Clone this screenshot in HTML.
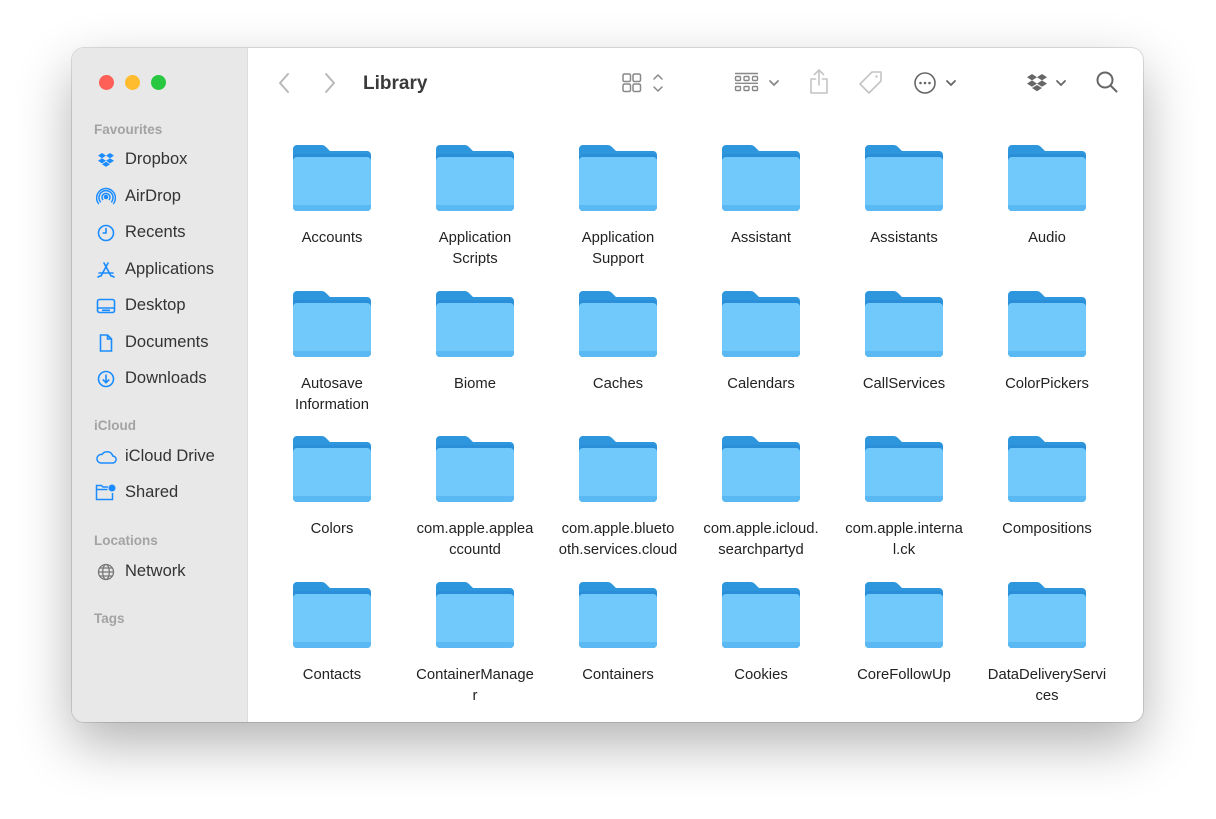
<!DOCTYPE html>
<html><head><meta charset="utf-8"><style>
*{margin:0;padding:0;box-sizing:border-box}
body{width:1216px;height:819px;background:#fff;font-family:"Liberation Sans",sans-serif;position:relative;overflow:hidden}
.win{position:absolute;left:72px;top:48px;width:1071px;height:674px;border-radius:12px;background:#fff;overflow:hidden;box-shadow:0 22px 55px rgba(0,0,0,.3),0 0 0 1px rgba(0,0,0,.12)}
.side{position:absolute;left:0;top:0;width:176px;height:100%;background:#e8e8e8;border-right:1px solid #dcdcdc}
.dot{position:absolute;top:27px;width:15px;height:15px;border-radius:50%}
.sec{position:absolute;left:22px;font-size:13.5px;color:#a3a3a3;font-weight:bold}
.it{position:absolute;left:53px;font-size:16.5px;color:#333}
.ic{position:absolute;left:24px;width:20px;height:20px}
.lbl{position:absolute;width:140px;text-align:center;font-size:14.8px;color:#222;line-height:21px}
.fold{position:absolute;width:78px;height:66px}
.tb{position:absolute}
</style></head><body>
<div class="win">
<div class="side">
<div class="dot" style="left:27px;background:#fe5f57"></div>
<div class="dot" style="left:53px;background:#febc2e"></div>
<div class="dot" style="left:79px;background:#28c840"></div>
<div class="sec" style="top:74px">Favourites</div>
<svg class="ic" style="top:102px" viewBox="0 0 20 20" fill="#1a8cff"><path d="M6 3l4 2.6-4 2.6-4-2.6zM14 3l4 2.6-4 2.6-4-2.6zM2 10.8l4-2.6 4 2.6-4 2.6zM18 10.8l-4-2.6-4 2.6 4 2.6zM6 14.3l4-2.5 4 2.5-4 2.6z"/></svg>
<div class="it" style="top:102px">Dropbox</div>
<svg class="ic" style="top:139px" viewBox="0 0 20 20" fill="none" stroke="#1a8cff" stroke-width="1.5"><circle cx="10" cy="10" r="1.5" fill="#1a8cff"/><path d="M7 13a4 4 0 1 1 6 0M4.8 15.3a7 7 0 1 1 10.4 0M2.8 17a9.4 9.4 0 1 1 14.4 0"/></svg>
<div class="it" style="top:139px">AirDrop</div>
<svg class="ic" style="top:175px" viewBox="0 0 20 20" fill="none" stroke="#1a8cff" stroke-width="1.6"><circle cx="10" cy="10" r="7.5"/><path d="M10 5v5H6.5"/></svg>
<div class="it" style="top:175px">Recents</div>
<svg class="ic" style="top:212px" viewBox="0 0 20 20" fill="none" stroke="#1a8cff" stroke-width="1.6" stroke-linecap="round"><path d="M8 3l7 13M12 3L5 16M3 13h14M2 17l2-1M18 17l-2-1"/></svg>
<div class="it" style="top:212px">Applications</div>
<svg class="ic" style="top:248px" viewBox="0 0 20 20" fill="none" stroke="#1a8cff" stroke-width="1.6"><rect x="1.5" y="3.5" width="17" height="13" rx="2"/><path d="M1.5 12h17M6 14.3h8"/></svg>
<div class="it" style="top:248px">Desktop</div>
<svg class="ic" style="top:285px" viewBox="0 0 20 20" fill="none" stroke="#1a8cff" stroke-width="1.6"><path d="M4.5 2h7l4 4v12h-11zM11.5 2v4h4"/></svg>
<div class="it" style="top:285px">Documents</div>
<svg class="ic" style="top:321px" viewBox="0 0 20 20" fill="none" stroke="#1a8cff" stroke-width="1.6"><circle cx="10" cy="10" r="7.5"/><path d="M10 5.5v8M6.8 10.5l3.2 3.2 3.2-3.2"/></svg>
<div class="it" style="top:321px">Downloads</div>
<div class="sec" style="top:370px">iCloud</div>
<svg class="ic" style="top:399px;left:23px;width:22px" viewBox="0 0 22 20" fill="none" stroke="#1a8cff" stroke-width="1.5"><path d="M5.5 16h12a3.5 3.5 0 0 0 .3-7A6 6 0 0 0 7 7.5 4.3 4.3 0 0 0 5.5 16z"/></svg>
<div class="it" style="top:399px">iCloud Drive</div>
<svg class="ic" style="top:435px;left:23px;width:22px" viewBox="0 0 22 20" fill="none" stroke="#1a8cff" stroke-width="1.5"><path d="M13 4H8L6.5 2.5H1.5v14h16V10M1.5 6.5h11"/><circle cx="17" cy="5" r="3.5" fill="#1a8cff" stroke="none"/></svg>
<div class="it" style="top:435px">Shared</div>
<div class="sec" style="top:485px">Locations</div>
<svg class="ic" style="top:514px" viewBox="0 0 20 20" fill="none" stroke="#777" stroke-width="1.3"><circle cx="10" cy="10" r="7.5"/><ellipse cx="10" cy="10" rx="3.3" ry="7.5"/><path d="M2.5 10h15M3.8 6h12.4M3.8 14h12.4"/></svg>
<div class="it" style="top:514px">Network</div>
<div class="sec" style="top:563px">Tags</div>
</div>
<svg class="tb" style="left:205px;top:24px" width="14" height="22" viewBox="0 0 14 22" fill="none" stroke="#b8b8b8" stroke-width="2" stroke-linecap="round" stroke-linejoin="round"><path d="M11 2L3 11l8 9"/></svg>
<svg class="tb" style="left:251px;top:24px" width="14" height="22" viewBox="0 0 14 22" fill="none" stroke="#b8b8b8" stroke-width="2" stroke-linecap="round" stroke-linejoin="round"><path d="M3 2l8 9-8 9"/></svg>
<div class="tb" style="left:291px;top:25px;font-size:19px;font-weight:bold;color:#3a3a3a">Library</div>
<svg class="tb" style="left:550px;top:24px" width="44" height="22" viewBox="0 0 44 22" fill="none" stroke="#888" stroke-width="1.5" stroke-linejoin="round"><rect x="1" y="2" width="7.5" height="7.5" rx="1.5"/><rect x="11" y="2" width="7.5" height="7.5" rx="1.5"/><rect x="1" y="12" width="7.5" height="7.5" rx="1.5"/><rect x="11" y="12" width="7.5" height="7.5" rx="1.5"/><path d="M32 7l4-4 4 4M32 15l4 4 4-4" stroke-linecap="round"/></svg>
<svg class="tb" style="left:662px;top:24px" width="48" height="22" viewBox="0 0 48 22" fill="none" stroke="#888" stroke-width="1.4"><path d="M1 1.5h23M1 11.3h23"/><rect x="1.5" y="4.5" width="5" height="4" rx="1"/><rect x="10" y="4.5" width="5" height="4" rx="1"/><rect x="18.5" y="4.5" width="5" height="4" rx="1"/><rect x="1.5" y="14.5" width="5" height="4" rx="1"/><rect x="10" y="14.5" width="5" height="4" rx="1"/><rect x="18.5" y="14.5" width="5" height="4" rx="1"/><path d="M36 9l4 4 4-4" stroke-width="1.8" stroke-linecap="round"/></svg>
<svg class="tb" style="left:736px;top:20px" width="22" height="28" viewBox="0 0 22 28" fill="none" stroke="#c4c4c4" stroke-width="1.6" stroke-linecap="round" stroke-linejoin="round"><path d="M11 2v15M6.5 6.5L11 2l4.5 4.5M7.5 11H3v14h16V11h-4.5"/></svg>
<svg class="tb" style="left:785px;top:21px" width="28" height="28" viewBox="0 0 28 28" fill="none" stroke="#c4c4c4" stroke-width="1.6" stroke-linejoin="round"><path d="M15 3h9v9L12 24 3 15z"/><circle cx="19.5" cy="7.5" r="1.2" fill="#c4c4c4" stroke="none"/></svg>
<svg class="tb" style="left:841px;top:22px" width="48" height="26" viewBox="0 0 48 26" fill="none" stroke="#666" stroke-width="1.6"><circle cx="12" cy="13" r="10"/><circle cx="7.5" cy="13" r="1.3" fill="#666" stroke="none"/><circle cx="12" cy="13" r="1.3" fill="#666" stroke="none"/><circle cx="16.5" cy="13" r="1.3" fill="#666" stroke="none"/><path d="M34 11l4 4 4-4" stroke-width="1.8" stroke-linecap="round"/></svg>
<svg class="tb" style="left:954px;top:24px" width="44" height="22" viewBox="0 0 44 22" fill="#666"><path d="M6 2l5 3.2-5 3.2-5-3.2zM16 2l5 3.2-5 3.2-5-3.2zM1 11.6l5-3.2 5 3.2-5 3.2zM21 11.6l-5-3.2-5 3.2 5 3.2zM6 16l5-3 5 3-5 3.2z"/><path d="M31 9l4 4 4-4" fill="none" stroke="#666" stroke-width="1.8" stroke-linecap="round"/></svg>
<svg class="tb" style="left:1023px;top:22px" width="24" height="24" viewBox="0 0 24 24" fill="none" stroke="#666" stroke-width="2" stroke-linecap="round"><circle cx="10" cy="10" r="7.5"/><path d="M15.5 15.5L21.5 21.5"/></svg>
<div id="grid"></div>
</div>
<script>
var names=[["Accounts"],["Application","Scripts"],["Application","Support"],["Assistant"],["Assistants"],["Audio"],
["Autosave","Information"],["Biome"],["Caches"],["Calendars"],["CallServices"],["ColorPickers"],
["Colors"],["com.apple.applea","ccountd"],["com.apple.blueto","oth.services.cloud"],["com.apple.icloud.","searchpartyd"],["com.apple.interna","l.ck"],["Compositions"],
["Contacts"],["ContainerManage","r"],["Containers"],["Cookies"],["CoreFollowUp"],["DataDeliveryServi","ces"]];
var tops=[145,291,436,582],h="";
var svg='<svg viewBox="0 0 78 66"><path d="M4 0h24c3 0 4 1 6 3l3 3h37a4 4 0 0 1 4 4v52a4 4 0 0 1-4 4H4a4 4 0 0 1-4-4V4a4 4 0 0 1 4-4z" fill="#2d96dd"/><path d="M0 13a4 4 0 0 1 4-4h70a4 4 0 0 1 4 4v49a4 4 0 0 1-4 4H4a4 4 0 0 1-4-4z" fill="#2a8fd8"/><path d="M0 16a4 4 0 0 1 4-4h70a4 4 0 0 1 4 4v46a4 4 0 0 1-4 4H4a4 4 0 0 1-4-4z" fill="#70c9fa"/><path d="M0 60h78v2a4 4 0 0 1-4 4H4a4 4 0 0 1-4-4z" fill="#5ab8f2"/></svg>';
for(var i=0;i<24;i++){var c=i%6,r=Math.floor(i/6);var cx=332+143*c-72,t=tops[r]-48;
h+='<div class="fold" style="left:'+(cx-39)+'px;top:'+t+'px">'+svg+'</div>';
h+='<div class="lbl" style="left:'+(cx-70)+'px;top:'+(t+83)+'px">'+names[i].join('<br>')+'</div>';}
document.getElementById('grid').innerHTML=h;
</script>
</body></html>
